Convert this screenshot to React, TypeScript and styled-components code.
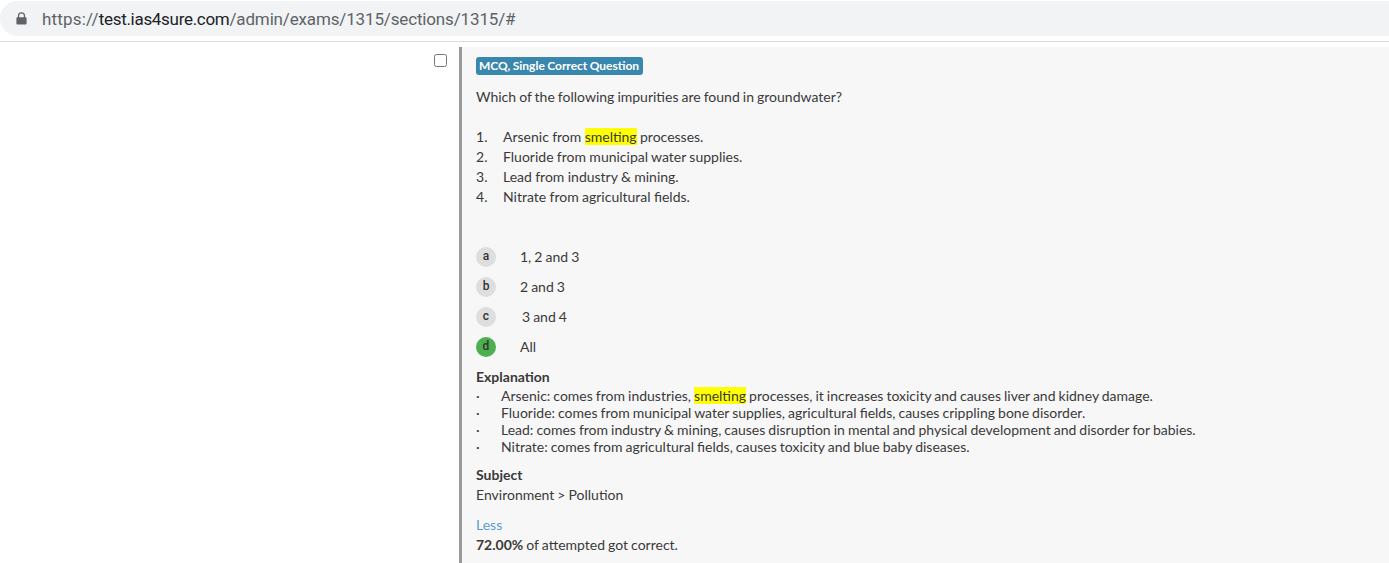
import { createGlobalStyle } from "styled-components";
import styled from "styled-components";

const GlobalStyle = createGlobalStyle`
  html, body {
    margin: 0;
    padding: 0;
    background: #fff;
    overflow: hidden;
  }
`;

const Page = styled.div`
  width: 1389px;
  height: 563px;
  overflow: hidden;
  font-family: Lato, sans-serif;
  font-size: 14px;
  word-spacing: -0.55px;
  color: #3a3a3a;
`;

const BrowserBar = styled.div`
  height: 42px;
  box-sizing: border-box;
  padding-top: 1px;
  border-bottom: 1px solid #dcdcdc;
`;

const UrlPill = styled.div`
  height: 35px;
  margin-right: -20px;
  display: flex;
  align-items: center;
  gap: 15px;
  padding-left: 16px;
  background: #f1f3f4;
  border-radius: 18px;
  font-family: Roboto, sans-serif;
  font-size: 17px;
  letter-spacing: -0.15px;
  word-spacing: 0;
  color: #5f6368;
`;

const Scheme = styled.span`
  letter-spacing: 0.2px;
`;

const Host = styled.span`
  letter-spacing: -0.3px;
  color: #202124;
`;

const Content = styled.div`
  display: flex;
  padding-top: 5px;
`;

const CheckCell = styled.div`
  width: 459px;
  flex: none;
  display: flex;
  justify-content: flex-end;
  align-items: flex-start;
  padding: 7px 12px 0 0;
  box-sizing: border-box;
`;

const CheckBox = styled.span`
  width: 13px;
  height: 13px;
  box-sizing: border-box;
  border: 1px solid #767676;
  border-radius: 2.5px;
  background: #fff;
`;

const Card = styled.div`
  flex: 1;
  height: 516px;
  box-sizing: border-box;
  padding: 10px 0 0 14px;
  background: #f7f7f7;
  border-left: 3px solid #999;
  line-height: 20px;
`;

const Badge = styled.div`
  display: inline-block;
  vertical-align: top;
  padding: 0 4px 0 3px;
  height: 18px;
  line-height: 18px;
  border-radius: 3px;
  background: #3a87ad;
  color: #fff;
  font-size: 12px;
  font-weight: 700;
`;

const Question = styled.p`
  margin: 10px 0 20px;
`;

const Statements = styled.div`
  margin-bottom: 40px;
  word-spacing: -0.25px;
`;

const Statement = styled.div`
  display: flex;
`;

const Num = styled.span`
  width: 27px;
  flex: none;
`;

const Mark = styled.mark`
  background: #ffff00;
  color: #3a3a3a;
`;

const Options = styled.div`
  display: flex;
  flex-direction: column;
  gap: 10px;
  margin-bottom: 10px;
`;

const Option = styled.div`
  display: flex;
  align-items: center;
`;

const OptionKey = styled.span<{ $correct?: boolean }>`
  width: 20px;
  height: 20px;
  flex: none;
  border-radius: 50%;
  background: ${(p) => (p.$correct ? "#4caf50" : "#dedede")};
  color: #333;
  text-align: center;
  font-family: Roboto, sans-serif;
  font-size: 12px;
  font-weight: 500;
  line-height: 19px;
`;

const OptionText = styled.span<{ $indent: number }>`
  margin-left: ${(p) => p.$indent}px;
`;

const SectionTitle = styled.div`
  font-weight: 700;
`;

const Explanation = styled.div`
  margin-bottom: 10px;
  line-height: 17px;
  ${SectionTitle} {
    line-height: 20px;
  }
`;

const ExplainRow = styled.div`
  display: flex;
`;

const Dot = styled.span`
  width: 25px;
  flex: none;
`;

const Subject = styled.div`
  margin-bottom: 10px;
`;

const LessLink = styled.a`
  display: block;
  color: #5b9bd5;
`;

const statements = [
  <>Arsenic from <Mark>smelting</Mark> processes.</>,
  "Fluoride from municipal water supplies.",
  "Lead from industry & mining.",
  "Nitrate from agricultural fields.",
];

const options = [
  { key: "a", text: "1, 2 and 3", indent: 24 },
  { key: "b", text: "2 and 3", indent: 24 },
  { key: "c", text: "3 and 4", indent: 26 },
  { key: "d", text: "All", indent: 24, correct: true },
];

const explanation = [
  <>Arsenic: comes from industries, <Mark>smelting</Mark> processes, it increases toxicity and causes liver and kidney damage.</>,
  "Fluoride: comes from municipal water supplies, agricultural fields, causes crippling bone disorder.",
  "Lead: comes from industry & mining, causes disruption in mental and physical development and disorder for babies.",
  "Nitrate: comes from agricultural fields, causes toxicity and blue baby diseases.",
];

export default function App() {
  return (
    <Page>
      <GlobalStyle />
      <BrowserBar>
        <UrlPill>
          <svg width="11" height="13" viewBox="0 0 13 15" fill="#5f6368">
            <path d="M2.2 6V4.4a4.3 4.3 0 0 1 8.6 0V6h.5c.7 0 1.2.5 1.2 1.2v6.1c0 .7-.5 1.2-1.2 1.2H1.7c-.7 0-1.2-.5-1.2-1.2V7.2C.5 6.500 1 6 1.700 6h.5zm1.500 0h5.600V4.400a2.800 2.800 0 0 0-5.600 0V6z" />
          </svg>
          <span>
            <Scheme>https://</Scheme>
            <Host>test.ias4sure.com</Host>/admin/exams/1315/sections/1315/#
          </span>
        </UrlPill>
      </BrowserBar>
      <Content>
        <CheckCell>
          <CheckBox />
        </CheckCell>
        <Card>
          <Badge>MCQ, Single Correct Question</Badge>
          <Question>Which of the following impurities are found in groundwater?</Question>
          <Statements>
            {statements.map((s, i) => (
              <Statement key={i}>
                <Num>{i + 1}.</Num>
                <span>{s}</span>
              </Statement>
            ))}
          </Statements>
          <Options>
            {options.map((o) => (
              <Option key={o.key}>
                <OptionKey $correct={o.correct}>{o.key}</OptionKey>
                <OptionText $indent={o.indent}>{o.text}</OptionText>
              </Option>
            ))}
          </Options>
          <Explanation>
            <SectionTitle>Explanation</SectionTitle>
            {explanation.map((e, i) => (
              <ExplainRow key={i}>
                <Dot>·</Dot>
                <span>{e}</span>
              </ExplainRow>
            ))}
          </Explanation>
          <Subject>
            <SectionTitle>Subject</SectionTitle>
            Environment &gt; Pollution
          </Subject>
          <LessLink>Less</LessLink>
          <div>
            <b>72.00%</b> of attempted got correct.
          </div>
        </Card>
      </Content>
    </Page>
  );
}
